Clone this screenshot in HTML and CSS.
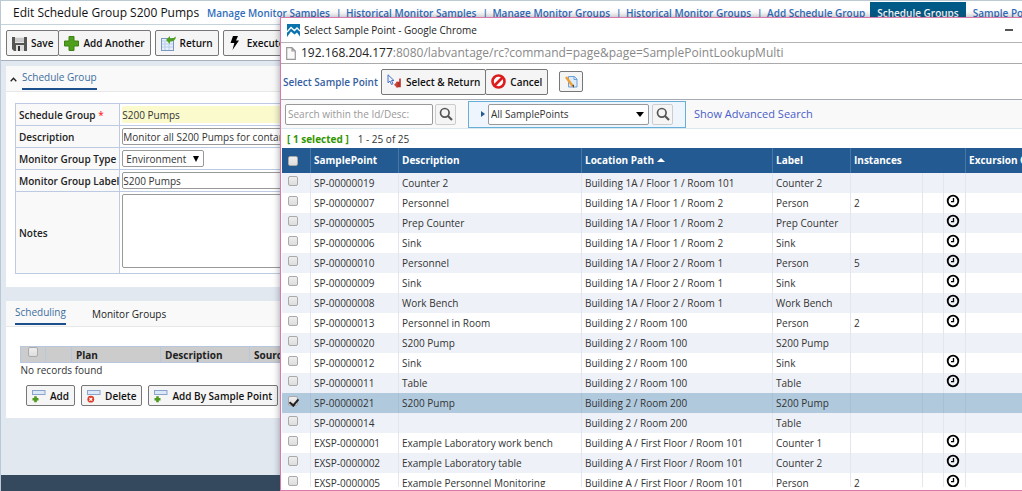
FILE: index.html
```html
<!DOCTYPE html>
<html lang="en">
<head>
<meta charset="utf-8">
<title>Edit Schedule Group S200 Pumps</title>
<link rel="stylesheet" href="styles.css">
</head>
<body>
<svg class="defs" aria-hidden="true">
  <symbol id="clock" viewBox="0 0 14 14"><circle cx="7" cy="7" r="5.3" fill="none" stroke="#000" stroke-width="1.8"/><path d="M7.5 4v3.7H5" fill="none" stroke="#000" stroke-width="1.3"/></symbol>
  <symbol id="lens" viewBox="0 0 14 14"><circle cx="5.8" cy="5.8" r="4.3" fill="none" stroke="#555" stroke-width="1.7"/><path d="M9 9l4 4" stroke="#555" stroke-width="2.2"/></symbol>
  <symbol id="rowadd" viewBox="0 0 14 14"><rect x=".5" y="1.5" width="12.5" height="4" fill="#dce8f7" stroke="#8aa5cb"/><path d="M3.5 7.200v6M.5 10.200h6" stroke="#4d9a1e" stroke-width="2.6"/></symbol>
  <symbol id="rowdel" viewBox="0 0 14 14"><rect x=".5" y="1.5" width="12.5" height="4" fill="#dce8f7" stroke="#8aa5cb"/><circle cx="3.8" cy="10.2" r="3.4" fill="#dd3d2c"/><path d="M2.4 8.8l2.8 2.8M5.2 8.8l-2.8 2.8" stroke="#fff" stroke-width="1.2"/></symbol>
</svg>

<div class="page">
  <header class="topbar">
    <h1 class="title">Edit Schedule Group S200 Pumps</h1>
    <nav class="nav">
      <a href="#">Manage Monitor Samples</a>
      <a href="#">Historical Monitor Samples</a>
      <a href="#">Manage Monitor Groups</a>
      <a href="#">Historical Monitor Groups</a>
      <a href="#">Add Schedule Group</a>
      <a href="#" class="active">Schedule Groups</a>
      <a href="#">Sample Points</a>
    </nav>
  </header>

  <div class="toolbar">
    <div class="group">
      <button class="btn" type="button"><svg width="15" height="15" viewBox="0 0 15 15"><path d="M0 1h15v14H2l-2-2z" fill="#555"/><path d="M3 1h9v6H3z" fill="#e8e8e8"/><path d="M3 3h9M3 5h9" stroke="#aaa"/><path d="M4 9h8v6H4z" fill="#ddd"/><path d="M6 10h2v5H6z" fill="#333"/></svg>Save</button>
      <button class="btn" type="button"><svg width="15" height="15" viewBox="0 0 15 15"><path d="M5 .5h5V5h4.500v5H10v4.500H5V10H.5V5H5z" fill="#4f9f1d" stroke="#3d8212"/></svg>Add Another</button>
    </div>
    <div class="group"><button class="btn" type="button"><svg width="15" height="15" viewBox="0 0 15 15"><rect x=".5" y="2.500" width="12" height="12" fill="#e6effa" stroke="#7b98c4"/><path d="M1 5h11M4 5v9M8 5v9M1 8h11M1 11h11" stroke="#b9cde8"/><path d="M5 4l4-4v2.500q4 0 6-2-.5 5-6 5V8z" fill="#4f9f1d"/></svg>Return</button></div>
    <div class="group"><button class="btn" type="button"><svg width="14" height="16" viewBox="0 0 14 16"><path d="M4 1h5L7 5.500h3L3.500 15l1.800-7H1.500z" fill="#000"/></svg>Execute</button></div>
  </div>

  <main class="content">
    <section class="panel">
      <div class="panel-head">
        <svg class="chev" width="7" height="5" viewBox="0 0 7 5"><path d="M.7 4.300L3.500 1.300l2.800 3" fill="none" stroke="#222" stroke-width="1.300"/></svg>
        <a href="#" class="tab on">Schedule Group</a>
      </div>
      <table class="form">
        <tr><th><label for="sg">Schedule Group <span class="req">*</span></label></th><td><input id="sg" class="field key" value="S200 Pumps"></td></tr>
        <tr><th><label for="ds">Description</label></th><td><input id="ds" class="field" value="Monitor all S200 Pumps for contamination"></td></tr>
        <tr><th><label for="mt">Monitor Group Type</label></th><td><span class="picker"><select id="mt"><option>Environment</option></select><svg width="6" height="6" viewBox="0 0 6 6"><path d="M0 0h6L3 6z"/></svg></span></td></tr>
        <tr><th><label for="ml">Monitor Group Label</label></th><td><input id="ml" class="field" value="S200 Pumps"></td></tr>
        <tr class="tall"><th><label for="nt">Notes</label></th><td><textarea id="nt" class="field notes"></textarea></td></tr>
      </table>
    </section>

    <section class="panel">
      <div class="panel-head wide">
        <a href="#" class="tab on">Scheduling</a>
        <a href="#" class="tab">Monitor Groups</a>
      </div>
      <div class="sched">
        <table class="plans">
          <colgroup><col class="p1"><col class="p2"><col class="p3"><col class="p3"><col></colgroup>
          <tr><th class="c"><input type="checkbox" aria-label="Select all plans"></th><th></th><th>Plan</th><th>Description</th><th>Source</th></tr>
          <tr><td colspan="5">No records found</td></tr>
        </table>
        <div class="actions">
          <button class="btn small" type="button"><svg width="14" height="14"><use href="#rowadd"/></svg>Add</button>
          <button class="btn small" type="button"><svg width="14" height="14"><use href="#rowdel"/></svg>Delete</button>
          <button class="btn small" type="button"><svg width="14" height="14"><use href="#rowadd"/></svg>Add By Sample Point</button>
        </div>
      </div>
    </section>
  </main>
  <footer class="footer"></footer>
</div>

<div class="popup" role="dialog" aria-label="Select Sample Point">
  <div class="winbar">
    <svg width="13" height="13" viewBox="0 0 13 13"><rect width="13" height="13" fill="#0873ad"/><path d="M0 8l4-4.500 3.500 3L10 4l3 3" fill="none" stroke="#fff" stroke-width="1.400"/><path d="M0 13l4-5.500 3.500 3L10 8.500l3 4V13z" fill="#fff"/></svg>
    <span>Select Sample Point - Google Chrome</span>
    <svg class="min" width="8" height="2" viewBox="0 0 8 2"><path d="M0 0h8v2H0z" fill="#555"/></svg>
  </div>
  <div class="address">
    <svg width="10" height="13" viewBox="0 0 10 13"><path d="M.7.7h5.300l3.300 3.300v8.300H.7zM6 .7V4h3.300" fill="#fafafa" stroke="#999" stroke-width="1.200"/></svg>
    <span><b>192.168.204.177</b>:8080/labvantage/rc?command=page&amp;page=SamplePointLookupMulti</span>
  </div>
  <div class="lookup-bar">
    <h2>Select Sample Point</h2>
    <div class="group">
      <button class="btn" type="button"><svg width="15" height="15" viewBox="0 0 15 15"><path d="M1 .8v8l2-1.700 1.500 3.400 1.500-.8L4.500 6.500H7z" fill="#eef4ff" stroke="#4a6fc4"/><path d="M13 4.500v8M10 8.500h3v4h-3z" fill="#b8322a" stroke="#b8322a" stroke-width="1.600"/><path d="M10.500 7.500L7 10.800l3.500 3.500z" fill="#c9483c"/></svg>Select &amp; Return</button>
      <button class="btn" type="button"><svg width="15" height="15" viewBox="0 0 15 15"><circle cx="7.500" cy="7.500" r="6" fill="#fff" stroke="#dc1d1d" stroke-width="2.600"/><path d="M3.500 11.500l8-8" stroke="#dc1d1d" stroke-width="2.600"/></svg>Cancel</button>
    </div>
    <button class="btn edit" type="button" aria-label="Edit"><svg width="14" height="14" viewBox="0 0 14 14"><path d="M4.500 1.500h6l2.500 2.500v8H4.500z" fill="#dcebfa" stroke="#6f9fd8"/><path d="M10 1.500V4.500h3" fill="none" stroke="#6f9fd8"/><path d="M2 2l7 9.500" stroke="#f0a030" stroke-width="2.400"/><path d="M8.300 10.500l1.700 2.500-.2-3.500z" fill="#333"/></svg></button>
  </div>
  <div class="search">
    <div class="find">
      <input class="field" placeholder="Search within the Id/Desc:" aria-label="Search within the Id/Desc">
      <button class="lens" type="button" aria-label="Search"><svg width="14" height="14"><use href="#lens"/></svg></button>
    </div>
    <div class="query">
      <svg width="4" height="6" viewBox="0 0 4 6"><path d="M0 0l4 3-4 3z" fill="#235a92"/></svg>
      <span class="picker"><select aria-label="Query"><option>All SamplePoints</option></select><svg width="8" height="5" viewBox="0 0 8 5"><path d="M0 0h8L4 5z"/></svg></span>
      <button class="lens" type="button" aria-label="Run query"><svg width="14" height="14"><use href="#lens"/></svg></button>
    </div>
    <a href="#">Show Advanced Search</a>
  </div>
  <p class="count"><strong>[ 1 selected ]</strong><span>1 - 25 of 25</span></p>
  <div class="grid-wrap">
  <table class="grid">
    <colgroup><col class="g1"><col class="g2"><col class="g3"><col class="g4"><col class="g5"><col class="g6"><col class="g7"><col class="g8"><col></colgroup>
    <thead><tr><th class="c"><input type="checkbox" aria-label="Select all"></th><th>SamplePoint</th><th>Description</th><th>Location Path <svg width="8" height="4" viewBox="0 0 8 4"><path d="M0 4h8L4 0z" fill="#fff"/></svg></th><th>Label</th><th colspan="3">Instances</th><th>Excursion Count</th></tr></thead>
    <tbody>
    <tr><td class="c"><input type="checkbox" aria-label="SP-00000019"></td><td>SP-00000019</td><td>Counter 2</td><td>Building 1A / Floor 1 / Room 101</td><td>Counter 2</td><td></td><td></td><td class="k"></td><td></td></tr>
    <tr><td class="c"><input type="checkbox" aria-label="SP-00000007"></td><td>SP-00000007</td><td>Personnel</td><td>Building 1A / Floor 1 / Room 2</td><td>Person</td><td>2</td><td></td><td class="k"><svg width="14" height="14"><use href="#clock"/></svg></td><td></td></tr>
    <tr><td class="c"><input type="checkbox" aria-label="SP-00000005"></td><td>SP-00000005</td><td>Prep Counter</td><td>Building 1A / Floor 1 / Room 2</td><td>Prep Counter</td><td></td><td></td><td class="k"><svg width="14" height="14"><use href="#clock"/></svg></td><td></td></tr>
    <tr><td class="c"><input type="checkbox" aria-label="SP-00000006"></td><td>SP-00000006</td><td>Sink</td><td>Building 1A / Floor 1 / Room 2</td><td>Sink</td><td></td><td></td><td class="k"><svg width="14" height="14"><use href="#clock"/></svg></td><td></td></tr>
    <tr><td class="c"><input type="checkbox" aria-label="SP-00000010"></td><td>SP-00000010</td><td>Personnel</td><td>Building 1A / Floor 2 / Room 1</td><td>Person</td><td>5</td><td></td><td class="k"><svg width="14" height="14"><use href="#clock"/></svg></td><td></td></tr>
    <tr><td class="c"><input type="checkbox" aria-label="SP-00000009"></td><td>SP-00000009</td><td>Sink</td><td>Building 1A / Floor 2 / Room 1</td><td>Sink</td><td></td><td></td><td class="k"><svg width="14" height="14"><use href="#clock"/></svg></td><td></td></tr>
    <tr><td class="c"><input type="checkbox" aria-label="SP-00000008"></td><td>SP-00000008</td><td>Work Bench</td><td>Building 1A / Floor 2 / Room 1</td><td>Work Bench</td><td></td><td></td><td class="k"><svg width="14" height="14"><use href="#clock"/></svg></td><td></td></tr>
    <tr><td class="c"><input type="checkbox" aria-label="SP-00000013"></td><td>SP-00000013</td><td>Personnel in Room</td><td>Building 2 / Room 100</td><td>Person</td><td>2</td><td></td><td class="k"><svg width="14" height="14"><use href="#clock"/></svg></td><td></td></tr>
    <tr><td class="c"><input type="checkbox" aria-label="SP-00000020"></td><td>SP-00000020</td><td>S200 Pump</td><td>Building 2 / Room 100</td><td>S200 Pump</td><td></td><td></td><td class="k"></td><td></td></tr>
    <tr><td class="c"><input type="checkbox" aria-label="SP-00000012"></td><td>SP-00000012</td><td>Sink</td><td>Building 2 / Room 100</td><td>Sink</td><td></td><td></td><td class="k"><svg width="14" height="14"><use href="#clock"/></svg></td><td></td></tr>
    <tr><td class="c"><input type="checkbox" aria-label="SP-00000011"></td><td>SP-00000011</td><td>Table</td><td>Building 2 / Room 100</td><td>Table</td><td></td><td></td><td class="k"><svg width="14" height="14"><use href="#clock"/></svg></td><td></td></tr>
    <tr class="picked"><td class="c"><input type="checkbox" checked aria-label="SP-00000021"></td><td>SP-00000021</td><td>S200 Pump</td><td>Building 2 / Room 200</td><td>S200 Pump</td><td></td><td></td><td class="k"></td><td></td></tr>
    <tr><td class="c"><input type="checkbox" aria-label="SP-00000014"></td><td>SP-00000014</td><td></td><td>Building 2 / Room 200</td><td>Table</td><td></td><td></td><td class="k"></td><td></td></tr>
    <tr><td class="c"><input type="checkbox" aria-label="EXSP-0000001"></td><td>EXSP-0000001</td><td>Example Laboratory work bench</td><td>Building A / First Floor / Room 101</td><td>Counter 1</td><td></td><td></td><td class="k"><svg width="14" height="14"><use href="#clock"/></svg></td><td></td></tr>
    <tr><td class="c"><input type="checkbox" aria-label="EXSP-0000002"></td><td>EXSP-0000002</td><td>Example Laboratory table</td><td>Building A / First Floor / Room 101</td><td>Counter 2</td><td></td><td></td><td class="k"><svg width="14" height="14"><use href="#clock"/></svg></td><td></td></tr>
    <tr><td class="c"><input type="checkbox" aria-label="EXSP-0000005"></td><td>EXSP-0000005</td><td>Example Personnel Monitoring</td><td>Building A / First Floor / Room 101</td><td>Person</td><td>2</td><td></td><td class="k"><svg width="14" height="14"><use href="#clock"/></svg></td><td></td></tr>
    </tbody>
  </table>
  </div>
</div>
</body>
</html>
```
FILE: styles.css
```css
* { box-sizing: border-box; }
body { margin: 0; font: 10px/14px "Open Sans", "Noto Sans", sans-serif; color: #333; }
button, input, select, textarea { font: inherit; color: inherit; margin: 0; }
a { text-decoration: none; }
svg { display: block; flex: none; }
.defs { position: absolute; width: 0; height: 0; }

.page { display: flex; flex-direction: column; height: 100vh; overflow: hidden; border-top: 1px solid #bccbd3; border-left: 1px solid #bcc7d6; background: #e2e8f0; }
.topbar { display: flex; align-items: stretch; height: 24px; padding-left: 12px; background: #fff; border-bottom: 1px solid #c3d3db; white-space: nowrap; overflow: hidden; flex: none; }
.title { width: 189px; margin: 0; font-size: 12px; line-height: 24px; font-weight: 400; color: #111; flex: none; }
.nav { display: flex; padding-top: 1px; font-size: 10px; line-height: 22px; font-weight: 600; }
.nav a { position: relative; padding: 0 5px; color: #2f6dbb; flex: none; }
.nav a + a { margin-left: 6px; }
.nav a + a::before { content: "|"; position: absolute; left: -5px; }
.nav a.active { margin-left: 0; padding: 0 7px; background: #005a87; color: #fff; }
.nav a.active::before, .nav a.active + a::before { content: none; }
.nav a.active + a { margin-left: 2px; }

.toolbar { display: flex; gap: 4px; height: 36px; padding: 5px; background: #fff; border-bottom: 1px solid #a9b1c0; overflow: hidden; flex: none; }
.group { display: flex; flex: none; }
.btn { display: flex; align-items: center; gap: 4px; height: 26px; padding: 0 5px; border: 1px solid #777; border-radius: 2px; background: #f5f5f5; font-size: 10px; font-weight: 600; color: #111; white-space: nowrap; flex: none; }
.btn + .btn { margin-left: -1px; }

.content { flex: 1; display: flex; flex-direction: column; gap: 14px; padding: 5px 0 0 5px; min-height: 0; }
.panel { background: #fff; flex: none; }
.panel-head { display: flex; align-items: flex-start; gap: 5px; height: 26px; padding: 4px 4px 0; background: #f9f9f9; border-bottom: 1px solid #e8e8e8; }
.panel-head.wide { gap: 26px; padding-left: 9px; }
.chev { margin-top: 7px; }
.tab { color: #222; font-weight: 500; padding-top: 2px; }
.tab.on { color: #3d6e9e; padding: 0 0 4px; border-bottom: 2px solid #1c508c; }
.form { width: calc(100% - 9px); margin: 11px 0 13px 9px; border-collapse: collapse; }
.form th, .form td { height: 22px; padding: 2px; border: 1px solid #bccbe2; }
.form .tall th { height: 82px; }
.form td { vertical-align: top; }
.form th { width: 103px; padding: 0 0 0 3px; background: #f9f9f9; text-align: left; font-weight: 600; color: #222; white-space: nowrap; }
.req { color: #f33; }
.field { display: block; width: 100%; height: 17px; padding: 0; border: 1px solid #999; border-radius: 2px; background: #fff; }
.field.key { border-color: #fafacd; background: #fafacd; border-width: 1px 0; }
.field.notes { height: 74px; resize: none; }
.picker { display: inline-grid; align-items: center; vertical-align: top; }
.picker select { grid-area: 1 / 1; height: 17px; padding: 0 16px 0 3px; border: 1px solid #999; border-radius: 2px; background: #fff; appearance: none; }
.picker svg { grid-area: 1 / 1; justify-self: end; margin-right: 5px; pointer-events: none; }

.sched { padding: 19px 0 12px 14px; }
.plans { width: 100%; table-layout: fixed; border-collapse: collapse; }
.p1 { width: 25px; } .p2 { width: 26px; } .p3 { width: 89px; }
.plans th { height: 16px; padding: 0 4px; background: #ccc; border: 1px solid #b9c7dd; text-align: left; font-weight: 700; color: #222; }
.plans td { padding: 0; }
.plans .c { text-align: center; vertical-align: top; line-height: 0; }
.actions { display: flex; gap: 6px; padding: 8px 0 0 6px; }
.btn.small { height: 21px; }
.actions .btn + .btn { margin-left: 0; }
.footer { height: 16px; background: #34495e; flex: none; }

input[type="checkbox"] { appearance: none; display: inline-grid; width: 10px; height: 10px; border: 1px solid #aaa; border-radius: 2px; background: linear-gradient(#eee, #ddd); vertical-align: top; }
input[type="checkbox"]:checked::before { content: ""; width: 4px; height: 7px; margin-left: 2px; border: solid #222; border-width: 0 2px 2px 0; transform: rotate(40deg); }

.popup { position: absolute; top: 17px; left: 280px; right: 0; bottom: 0; display: flex; flex-direction: column; overflow: hidden; background: #fff; border: 1px solid #d878ae; border-right: 0; box-shadow: 0 0 7px rgba(60, 60, 80, .5); }
.winbar, .address, .lookup-bar, .search, .count { display: flex; align-items: center; flex: none; margin: 0; }
.winbar { height: 25px; padding: 0 9px 0 6px; gap: 4px; border-bottom: 1px solid #b4b4b4; color: #222; }
.min { margin-left: auto; }
.address { height: 21px; gap: 5px; padding-left: 5px; border-bottom: 1px solid #aaa; font-size: 12px; color: #888; }
.address b { font-weight: 400; color: #222; }
.lookup-bar { height: 36px; padding-left: 2px; gap: 3px; border-bottom: 1px solid #a5aab5; }
.lookup-bar h2 { margin: 0; font-size: 10px; font-weight: 600; color: #3560a0; }
.btn.edit { width: 24px; height: 21px; margin-left: 8px; padding: 0 4px; }
.search { height: 29px; gap: 12px; padding-left: 4px; background: #f9f9f9; border-bottom: 1px solid #d8e8f0; }
.find, .query { display: flex; align-items: center; gap: 2px; }
.search .field, .search select, .lens { height: 21px; }
.find .field { width: 148px; padding: 0 2px; }
.field::placeholder { color: #999; opacity: 1; }
.lens { display: grid; place-items: center; width: 21px; padding: 0; border: 1px solid #ccc; border-radius: 2px; background: #f5f5f5; }
.query { height: 27px; padding: 0 12px; gap: 3px; background: #eef5fc; border: 1px solid #68afd7; }
.query .picker { width: 161px; }
.query select { padding-left: 2px; width: 100%; }
.search a { margin-left: -4px; font-size: 11px; color: #4a5cc8; }
.count { height: 19px; padding-left: 6px; gap: 9px; }
.count strong { color: #329600; font-weight: 700; }
.grid-wrap { flex: 1; min-height: 0; margin: 0 0 3px 1px; overflow: hidden; }
.grid { width: 100%; table-layout: fixed; border-collapse: separate; border-spacing: 0; }
.g1 { width: 29px; } .g2 { width: 88px; } .g3 { width: 183px; } .g4 { width: 191px; }
.g5 { width: 78px; } .g6 { width: 72px; } .g7 { width: 21px; } .g8 { width: 22px; }
.grid th { height: 25px; padding: 0 0 2px 3px; background: #235a92; border-right: 1px solid #4677a8; color: #fff; text-align: left; font-weight: 700; white-space: nowrap; }
.grid th svg { display: inline-block; vertical-align: 2px; }
.grid td { height: 20px; padding: 0 0 0 3px; border-right: 1px solid #e3e6ec; white-space: nowrap; }
.grid tr > :last-child { border-right: 0; overflow: hidden; }
.grid tbody tr:nth-child(odd) { background: #eef1f7; }
.grid tbody tr.picked { background: #b0c9dd; }
.grid .picked td { border-right-color: #a9c0d4; }
.grid .c { padding: 0 6px; line-height: 0; }
.grid td.c { padding-top: 3px; vertical-align: top; }
.grid td.k { padding: 1px 0 0 2px; vertical-align: top; }
```
